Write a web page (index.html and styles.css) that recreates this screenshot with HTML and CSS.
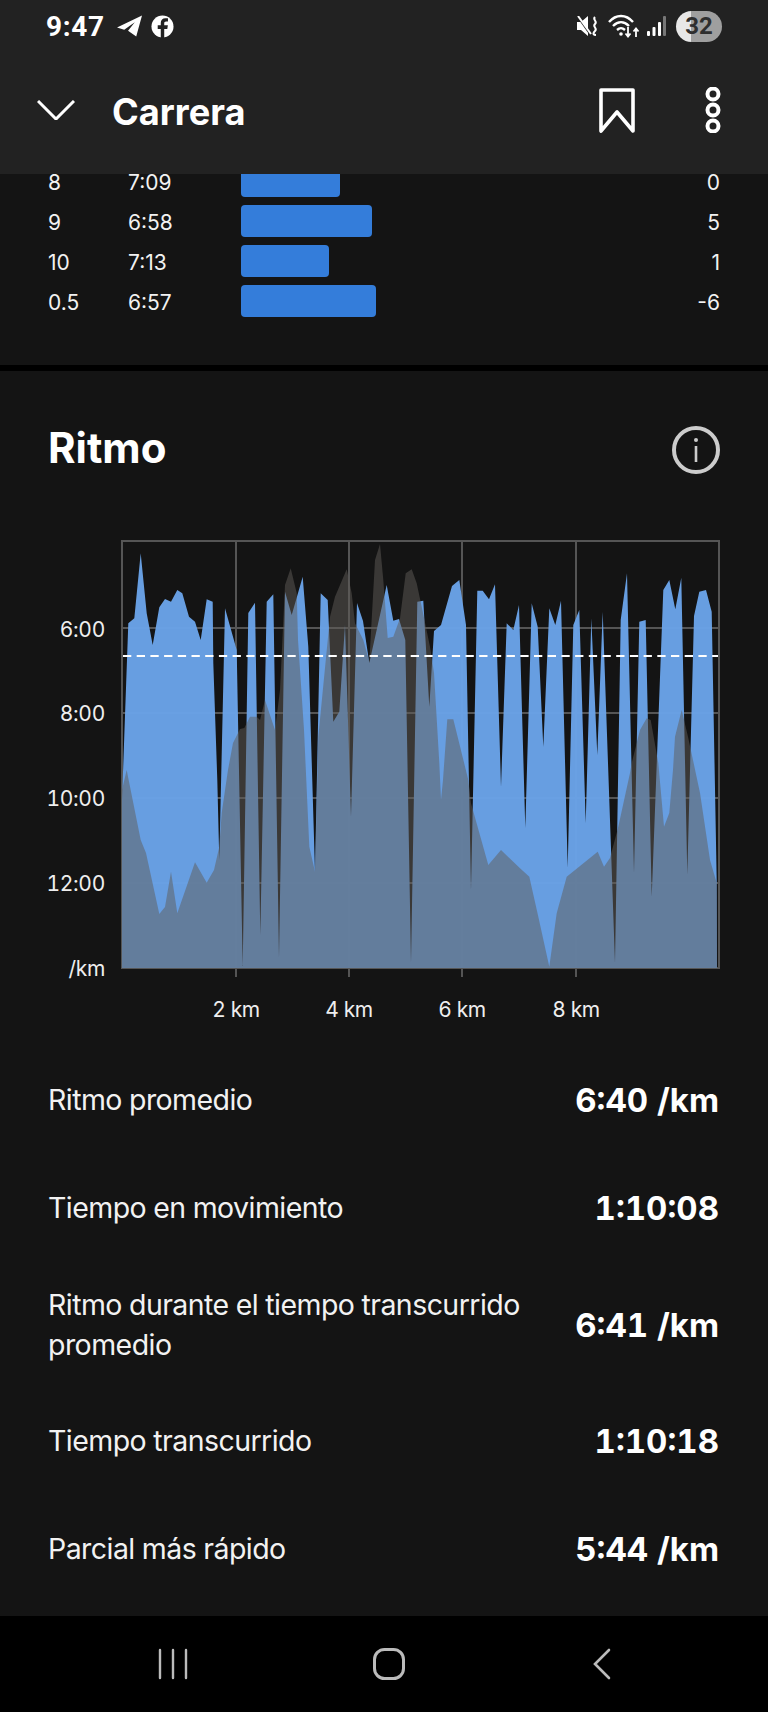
FILE: index.html
```html
<!DOCTYPE html>
<html lang="en">
<head>
    <meta charset="UTF-8">
    <meta name="viewport" content="width=device-width, initial-scale=1.0">
    <title>Carrera</title>
    <link rel="stylesheet" href="styles.css">
</head>
<body>
    <header class="top">
        <div class="status">
            <span class="clock">9:47</span>
            <svg class="ico-telegram" viewBox="0 0 26 22"><path d="M26 0 0 12.500l7.500 2.500L18.500 7 11.500 16l8.500 6z" fill="#fff"/></svg>
            <svg class="ico-fb" viewBox="0 0 24 24"><circle cx="12" cy="12" r="11.500" fill="#fff"/><path d="M13.800 24v-9.500h3.200l.6-3.700h-3.800V8.600c0-1.100.5-1.900 2-1.900h1.900V3.500c-.5-.1-1.600-.2-2.700-.2-2.900 0-4.800 1.700-4.800 4.800v2.700H7v3.700h3.200V24z" fill="#222"/></svg>
            <span class="status-gap"></span>
            <svg class="ico-mute" viewBox="0 0 22 20"><path d="M0 6h4l7-6v20l-7-6H0z" fill="#fff"/><path d="M1 1l12 17" stroke="#222" stroke-width="2"/><path d="M1 0l13 18" stroke="#fff" stroke-width="2"/><path d="M18 1c-3 3 3 4 0 7s3 4 0 7-1 4 1 4" fill="none" stroke="#fff" stroke-width="2"/></svg>
            <svg class="ico-wifi" viewBox="0 0 32 24"><g fill="none" stroke="#fff" stroke-width="2.400"><path d="M1 8c7-8 17-8 24 0"/><path d="M5 12c5-5 11-5 16 0"/><path d="M9 16c3-2.500 5-2.500 8 0"/></g><circle cx="13" cy="20" r="1.800" fill="#fff"/><path d="M20 13v9m-2.500-2.500 2.500 3 2.500-3M28 23v-8m-2.500 2.500 2.500-3 2.500 3" fill="none" stroke="#fff" stroke-width="1.800"/></svg>
            <svg class="ico-signal" viewBox="0 0 19 20"><rect x="0" y="15" width="3" height="5" rx="1" fill="#fff"/><rect x="5.500" y="11" width="3" height="9" rx="1" fill="#fff"/><rect x="11" y="6" width="3" height="14" rx="1" fill="#fff"/><rect x="16" y="0" width="3" height="20" rx="1" fill="#777"/></svg>
            <span class="battery">32</span>
        </div>
        <div class="toolbar">
            <svg class="ico-chevron" viewBox="0 0 38 20"><path d="M1 1l18 18L37 1" fill="none" stroke="#fff" stroke-width="3"/></svg>
            <h1 class="title">Carrera</h1>
            <svg class="ico-bookmark" viewBox="0 0 36 45"><path d="M2 2h32v41L18 24 2 43z" fill="none" stroke="#fff" stroke-width="3.600" stroke-linejoin="round"/></svg>
            <svg class="ico-more" viewBox="0 0 18 46"><g fill="none" stroke="#fff" stroke-width="4"><circle cx="9" cy="7" r="5.500"/><circle cx="9" cy="23" r="5.500"/><circle cx="9" cy="39" r="5.500"/></g></svg>
        </div>
    </header>

    <main class="content">
        <section class="splits">
            <div class="split"><span>8</span><span>7:09</span><div class="bar" style="width:99px"></div><span class="elev">0</span></div>
            <div class="split"><span>9</span><span>6:58</span><div class="bar" style="width:131px"></div><span class="elev">5</span></div>
            <div class="split"><span>10</span><span>7:13</span><div class="bar" style="width:88px"></div><span class="elev">1</span></div>
            <div class="split"><span>0.5</span><span>6:57</span><div class="bar" style="width:135px"></div><span class="elev">-6</span></div>
        </section>

        <section class="pace">
            <div class="pace-head">
                <h2>Ritmo</h2>
                <svg class="ico-info" viewBox="0 0 48 48"><circle cx="24" cy="24" r="22" fill="none" stroke="#ccc" stroke-width="4"/><circle cx="24" cy="14" r="2" fill="#ccc"/><rect x="22.700" y="20" width="2.600" height="16" fill="#ccc"/></svg>
            </div>

            <!-- coordinates in here are page pixels -->
            <svg class="chart" viewBox="0 530 768 500">
                <g stroke="#555" stroke-width="2" fill="none">
                    <path d="M122 541H719V968H122Z"/>
                    <path d="M236 541V977M349 541V977M462 541V977M576 541V977"/>
                    <path d="M122 628H719M122 713H719M122 798H719M122 883H719"/>
                </g>
                <polygon class="area-pace" points="122,968 122,800 128.300,623.300 134.300,618.300 140.700,553.300 146.700,613.300 152.700,645 159.300,607.300 165,599 171,601.700 177.300,590 182.300,593.300 189,616.700 195,621.700 200.700,640 206.700,599.300 212.700,601.700 213.300,663 217.300,780 219.300,860 225,608.300 236.700,650 242.700,966 248.300,613 255,602.700 260.300,935 266.700,601.700 273.300,594.300 279,958 285,591.700 291.700,615 302.700,576.700 308.300,646.700 315,871.700 320.700,593.300 327.700,600 333.300,721.700 339.300,711.700 345,625 351,816.700 357,603 363,621 369.300,663 386.700,585 393.300,620.700 399,619 405.300,640 411,963 417.300,601.700 423.300,600.700 429.300,706.700 434,631 441,625 452,586 459.300,580 466,625 471,890 477.300,590.700 482.700,590.700 489,599.300 495,584.300 501,786.700 506.700,623.300 513.300,630 519,605 525.300,828 531.700,603.300 537.700,626.700 543.300,746.700 549.300,608.300 555.300,625 561,600.700 567.700,868 573.300,625 579.300,610 585.700,823 591.300,618.300 597.300,755 602.700,611.700 615,963 620.700,620 627,573.300 634,873 639.300,621.700 645.700,620 651.700,896.700 663.300,590 669.300,580 675.300,609.300 681.300,577.700 687.300,875 694,616 699.300,591.700 706,590 711.700,611.700 716.700,880 717,968"/>
                <polygon class="area-elev" points="122,968 122,790 126.700,770 128,776.700 140.700,840 146,853 159.300,914 165,907 171,871.700 177.300,913.300 195,862.300 206.700,882.700 214,870 219.300,846.700 221.700,813 228,770 233,743 240,729 244.300,728 250,716.700 256.700,716.700 260,720 265,700 275,730 280,690 285,585 290.700,568.300 296.700,593 298,640 304,730 309.300,846.700 315,871.700 318.300,736.700 330,616.700 335,596.700 346.700,569.300 351.700,593.300 355,623.300 363.300,640 369.300,661.700 375,560 380,544 383.300,580 387.700,638 393.300,636.700 400,618.300 405.700,573.300 411.700,569.300 416.700,583.300 421.700,606.700 430,646.700 434,673 439.300,763 441,800 443,780 447.300,719.300 453.300,719.300 468.300,780 471,803.300 488.300,865 501,850 520,868.300 529.300,876.700 538.300,916.700 549.300,966.700 556.700,913.300 566.700,876.700 597.700,851.700 604,866.700 610,858 618.300,826.700 630,773 631.700,763 640,730 646.700,718.300 650.700,720 658.300,763 664,826.700 669.300,813 673,770 675,736.700 681.700,710 688,736.700 700,793 710,860 716.700,883 717,968"/>
                <path class="avg" d="M123 656H718"/>
                <g class="axis-y">
                    <text x="105" y="636.500">6:00</text>
                    <text x="105" y="721">8:00</text>
                    <text x="105" y="806">10:00</text>
                    <text x="105" y="891">12:00</text>
                    <text x="105" y="976">/km</text>
                </g>
                <g class="axis-x">
                    <text x="236" y="1017">2 km</text>
                    <text x="349" y="1017">4 km</text>
                    <text x="462" y="1017">6 km</text>
                    <text x="576" y="1017">8 km</text>
                </g>
            </svg>

            <div class="stats">
                <div class="stat"><span>Ritmo promedio</span><b>6:40 /km</b></div>
                <div class="stat"><span>Tiempo en movimiento</span><b>1:10:08</b></div>
                <div class="stat stat-tall"><span>Ritmo durante el tiempo transcurrido promedio</span><b>6:41 /km</b></div>
                <div class="stat"><span>Tiempo transcurrido</span><b>1:10:18</b></div>
                <div class="stat"><span>Parcial más rápido</span><b>5:44 /km</b></div>
            </div>
        </section>
    </main>

    <nav class="navbar">
        <svg class="ico-recents" viewBox="0 0 30 32"><path d="M2 2v28M15 2v28M28 2v28" stroke="#bbb" stroke-width="2.400" stroke-linecap="round"/></svg>
        <svg class="ico-home" viewBox="0 0 32 32"><rect x="1.500" y="1.500" width="29" height="29" rx="10" fill="none" stroke="#bbb" stroke-width="3"/></svg>
        <svg class="ico-back" viewBox="0 0 18 32"><path d="M16 2 2 16l14 14" fill="none" stroke="#bbb" stroke-width="2.600" stroke-linecap="round"/></svg>
    </nav>
</body>
</html>
```

FILE: styles.css
```css
* {
    box-sizing: border-box;
}
html, body {
    margin: 0;
    padding: 0;
}
body {
    width: 768px;
    height: 1712px;
    overflow: hidden;
    display: flex;
    flex-direction: column;
    background-color: #141414;
    color: #f2f2f2;
    font-family: Inter, "Noto Sans", sans-serif;
    font-variant-numeric: tabular-nums;
}
svg {
    display: block;
    flex: none;
}

/* top bar */
.top {
    height: 174px;
    flex: none;
    position: relative;
    z-index: 2;
    background-color: #222;
    color: #fff;
}
.status {
    height: 52px;
    padding: 0 46px;
    display: flex;
    align-items: center;
}
.clock {
    width: 71px;
    font-family: Roboto, sans-serif;
    font-size: 28px;
    font-weight: 700;
    letter-spacing: 0.7px;
}
.ico-telegram { width: 25px; height: 22px; }
.ico-fb { width: 23px; height: 23px; margin-left: 9px; }
.status-gap { flex: 1; }
.ico-mute { width: 22px; height: 20px; }
.ico-wifi { width: 32px; height: 24px; margin-left: 9px; }
.ico-signal { width: 19px; height: 20px; margin-left: 7px; }
.battery {
    width: 46px;
    height: 31px;
    margin-left: 10px;
    border-radius: 16px;
    background: linear-gradient(90deg, #e8e8e8 0 15px, #9f9f9f 15px);
    color: #2f2f2f;
    font-family: Roboto, sans-serif;
    font-size: 24px;
    font-weight: 700;
    line-height: 31px;
    text-align: center;
}
.toolbar {
    height: 116px;
    padding: 0 46px 0 37px;
    display: flex;
    align-items: center;
}
.ico-chevron { width: 38px; height: 20px; }
.title {
    flex: 1;
    margin: 4px 0 0 37px;
    font-size: 36.200px;
    font-weight: 700;
}
.ico-bookmark { width: 36px; height: 45px; }
.ico-more { width: 18px; height: 46px; margin-left: 69px; }

/* scrolled content */
.content {
    flex: 1;
    min-height: 0;
    overflow: hidden;
}
.splits {
    margin-top: -9px;
    padding: 0 48px 48px;
    display: flex;
    flex-direction: column;
    gap: 8px;
}
.split {
    height: 32px;
    display: grid;
    grid-template-columns: 80px 113px 1fr auto;
    align-items: center;
    font-size: 21px;
    font-variant-numeric: normal;
}
.split span {
    margin-top: 2px;
}
.bar {
    height: 32px;
    border-radius: 4px;
    background-color: #347dda;
}
.pace {
    border-top: 6px solid #000;
}
.pace-head {
    height: 50px;
    margin: 54px 0 55px;
    padding: 0 48px;
    display: flex;
    align-items: center;
    justify-content: space-between;
}
.pace-head h2 {
    margin: 0 0 5px;
    font-size: 42px;
    font-weight: 700;
    color: #fff;
}
.ico-info { width: 48px; height: 48px; }

/* chart */
.chart {
    width: 768px;
    height: 500px;
}
.area-pace { fill: #6aa3e8; fill-opacity: 0.97; }
.area-elev { fill: #5f5c58; fill-opacity: 0.5; }
.avg {
    stroke: #fff;
    stroke-width: 2;
    stroke-dasharray: 8.300 5.400;
    fill: none;
}
.chart text {
    fill: #eee;
    font-family: Inter, sans-serif;
    font-size: 21px;
}
.axis-y text { text-anchor: end; letter-spacing: -0.3px; }
.axis-x text { text-anchor: middle; letter-spacing: -0.4px; }

/* summary rows */
.stats {
    margin-top: 16px;
    padding: 0 49px 0 48px;
}
.stat {
    min-height: 108px;
    display: flex;
    align-items: center;
    justify-content: space-between;
    gap: 40px;
    font-size: 28.500px;
    letter-spacing: -0.55px;
    line-height: 40px;
}
.stat-tall { min-height: 125px; }
.stat span { max-width: 490px; }
.stat b {
    flex: none;
    font-size: 33px;
    font-weight: 700;
    letter-spacing: 0;
    color: #fff;
}

/* android nav */
.navbar {
    height: 96px;
    flex: none;
    padding-bottom: 1px;
    display: flex;
    align-items: center;
    background-color: #000;
}
.ico-recents { width: 30px; height: 32px; margin-left: 158px; }
.ico-home { width: 32px; height: 32px; margin-left: 185px; }
.ico-back { width: 18px; height: 32px; margin-left: 188px; }
```
